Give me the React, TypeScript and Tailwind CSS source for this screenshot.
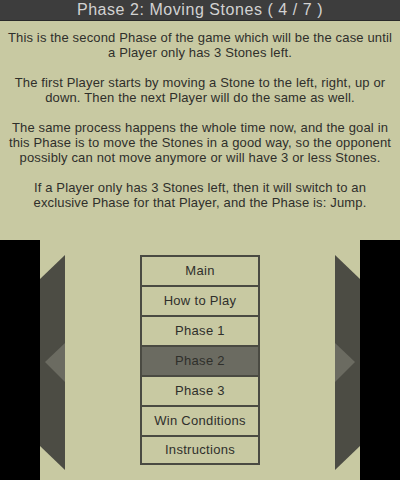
const paragraphs = [
  ['This is the second Phase of the game which will be the case until', 'a Player only has 3 Stones left.'],
  ['The first Player starts by moving a Stone to the left, right, up or', 'down. Then the next Player will do the same as well.'],
  [
    'The same process happens the whole time now, and the goal in',
    'this Phase is to move the Stones in a good way, so the opponent',
    'possibly can not move anymore or will have 3 or less Stones.',
  ],
  ['If a Player only has 3 Stones left, then it will switch to an', 'exclusive Phase for that Player, and the Phase is: Jump.'],
];

const menu = ['Main', 'How to Play', 'Phase 1', 'Phase 2', 'Phase 3', 'Win Conditions', 'Instructions'];

function Arrow({ flip }: { flip?: boolean }) {
  return (
    <svg width="25" height="240" viewBox="0 0 25 240" className={flip ? '-scale-x-100' : ''}>
      <polygon points="0,39 25,15 25,230 0,206" fill="#4c4c44" />
      <polygon points="25,103 5,122 25,142" fill="#6b6b61" />
    </svg>
  );
}

export default function App() {
  return (
    <div
      className="w-[400px] h-[480px] bg-[#c8c9a2] flex flex-col overflow-hidden"
      style={{ fontFamily: '"Liberation Sans", Arial, sans-serif' }}
    >
      {/* Title bar */}
      <div className="h-[21px] bg-[#3d3d3d] border-b border-[#2a2a2a] flex items-center justify-center text-[16px] text-[#d2d2d2] tracking-[0.55px]">
        Phase 2: Moving Stones ( 4 / 7 )
      </div>

      {/* Description */}
      <div className="h-[219px] pt-[9px] flex flex-col gap-[15px] text-[13px] leading-[15px] text-[#2f2f2b] text-center tracking-[0.15px]">
        {paragraphs.map((p, i) => (
          <p key={i}>
            {p.map((line) => (
              <span key={line} className="block whitespace-nowrap">
                {line}
              </span>
            ))}
          </p>
        ))}
      </div>

      {/* Bottom navigation */}
      <div className="h-[240px] flex">
        <div className="w-[40px] bg-black" />
        <Arrow />
        <div className="flex-1 flex justify-center pt-[15px]">
          <div className="w-[120px] flex flex-col">
            {menu.map((item, i) => (
              <div
                key={item}
                className={
                  'h-[30px] flex items-center justify-center border-x-2 border-t-2 border-[#4a4a42] text-[13px] tracking-[0.3px] text-[#2f2f2b] ' +
                  (item === 'Phase 2' ? 'bg-[#6b6b61] ' : 'bg-[#c8c9a2] ') +
                  (i === menu.length - 1 ? 'border-b-2' : '')
                }
              >
                {item}
              </div>
            ))}
          </div>
        </div>
        <Arrow flip />
        <div className="w-[40px] bg-black" />
      </div>
    </div>
  );
}
